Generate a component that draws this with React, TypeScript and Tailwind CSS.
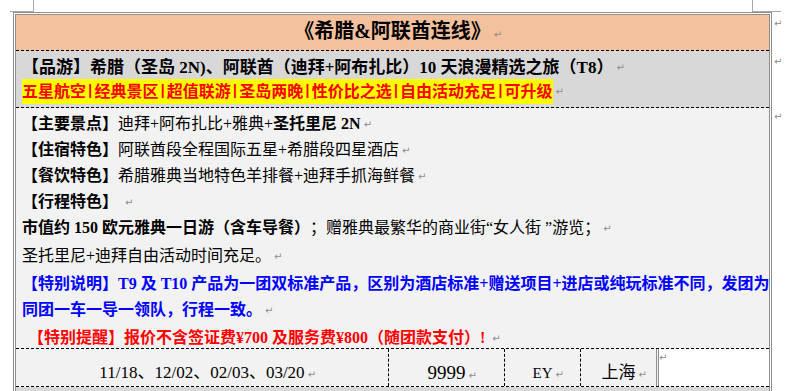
const Mark = () => (
  <span className="ml-[3px] font-['DejaVu_Sans',sans-serif] text-[10px] font-normal text-[#8c8c8c]">↵</span>
);

// mark that does not take part in centring
const TailMark = () => (
  <span className="inline-block w-0 whitespace-nowrap">
    <Mark />
  </span>
);

const tags = ["五星航空", "经典景区", "超值联游", "圣岛两晚", "性价比之选", "自由活动充足", "可升级"];

export default function App() {
  return (
    <div className="w-[785px] h-[391px] overflow-hidden bg-white font-['Liberation_Serif','Noto_Sans_CJK_SC',serif] text-black">
      {/* page corner marks */}
      <div className="flex h-[12px]">
        <div className="ml-[10px] w-[24px] h-[12px] border-r border-b border-[#a8a8a8]" />
        <div className="ml-[718px] w-[29px] h-[12px] border-l border-b border-[#a8a8a8]" />
      </div>

      <div className="flex">
        <div className="ml-[13px] w-[759px] border border-[#8f8f8f] p-px">
          <div className="border border-[#8f8f8f]">
            {/* title */}
            <div className="h-[36px] bg-[#f4c19e] border-b border-dashed border-black flex items-center justify-center">
              <span className="text-[20px] font-bold leading-[24px]">
                《希腊&amp;阿联酋连线》
                <TailMark />
              </span>
            </div>

            {/* product line */}
            <div className="h-[57px] bg-[#d8d8d8] border-b border-dashed border-black pl-[6px] pt-[5px] whitespace-nowrap">
              <div className="h-[23px] flex items-center text-[17px] font-bold">
                <span>【品游】希腊（圣岛 2N)、阿联酋（迪拜+阿布扎比）10 天浪漫精选之旅（T8）</span>
                <Mark />
              </div>
              <div className="h-[25px] flex items-center">
                <span className="h-[25px] flex items-center bg-[#ffff00] text-[#ff0000] text-[16px] font-bold">
                  {tags.map((t, i) => (
                    <span key={t} className="flex items-center">
                      {i > 0 && <span className="font-['Liberation_Mono',monospace] text-[14px]">|</span>}
                      {t}
                    </span>
                  ))}
                </span>
                <Mark />
              </div>
            </div>

            {/* details */}
            <div className="h-[241px] bg-[#f2f2f2] border-b border-dashed border-black pl-[6px] pt-[3px] text-[16px] whitespace-nowrap [&>div]:h-[26px] [&>div]:flex [&>div]:items-center">
              <div>
                <b>【主要景点】</b>迪拜+阿布扎比+雅典+<b>圣托里尼 2N</b>
                <Mark />
              </div>
              <div>
                <b>【住宿特色】</b>阿联酋段全程国际五星+希腊段四星酒店
                <Mark />
              </div>
              <div>
                <b>【餐饮特色】</b>希腊雅典当地特色羊排餐+迪拜手抓海鲜餐
                <Mark />
              </div>
              <div>
                <b>【行程特色】</b>
                <span className="ml-[4px]" />
                <Mark />
              </div>
              <div>
                <b>市值约 150 欧元雅典一日游（含车导餐）</b>
                <span>；赠雅典最繁华的商业街“女人街 ”游览；</span>
                <Mark />
              </div>
              <div className="mt-[2px]">
                <span>圣托里尼+迪拜自由活动时间充足。</span>
                <Mark />
              </div>
              <div className="mt-[2px] font-bold text-[#0000ff]">
                <span>【特别说明】T9 及 T10 产品为一团双标准产品，区别为酒店标准+赠送项目+进店或纯玩标准不同，发团为</span>
              </div>
              <div className="font-bold text-[#0000ff]">
                <span>同团一车一导一领队，行程一致。</span>
                <Mark />
              </div>
              <div className="mt-[2px] pl-[6px] font-bold text-[#ff0000]">
                <span>【特别提醒】报价不含签证费¥700 及服务费¥800（随团款支付）!</span>
                <span className="ml-[4px]" />
                <Mark />
              </div>
            </div>

            {/* departure row */}
            <div className="flex h-[38px] border-b border-dashed border-black">
              <div className="w-[373px] bg-[#f2f2f2] border-r border-dashed border-black text-center pt-[13px] text-[17px] leading-[22px]">
                11/18、12/02、02/03、03/20
                <TailMark />
              </div>
              <div className="w-[116px] bg-[#f2f2f2] border-r border-dashed border-black text-center pt-[13px] text-[19px] leading-[22px]">
                9999
                <TailMark />
              </div>
              <div className="w-[76px] bg-[#f2f2f2] border-r border-dashed border-black text-center pt-[13px] text-[15px] leading-[22px]">
                EY
                <TailMark />
              </div>
              <div className="w-[78px] bg-[#f2f2f2] border-r-[3px] border-double border-[#8f8f8f] text-center pt-[13px] text-[17px] leading-[22px]">
                上海
                <TailMark />
              </div>
              <div className="flex-1 bg-white pt-[2px] leading-[10px]">
                <span className="font-['DejaVu_Sans',sans-serif] text-[10px] text-[#8c8c8c]">↵</span>
              </div>
            </div>

            <div className="h-[20px] bg-[#d8d8d8]" />
          </div>
        </div>

        {/* end-of-row marks */}
        <div className="flex flex-col pl-[2px] font-['DejaVu_Sans',sans-serif] text-[10px] leading-[10px] text-[#8c8c8c]">
          <div className="mt-[7px]">↵</div>
          <div className="mt-[28px]">↵</div>
          <div className="mt-[45px]">↵</div>
        </div>
      </div>
    </div>
  );
}
